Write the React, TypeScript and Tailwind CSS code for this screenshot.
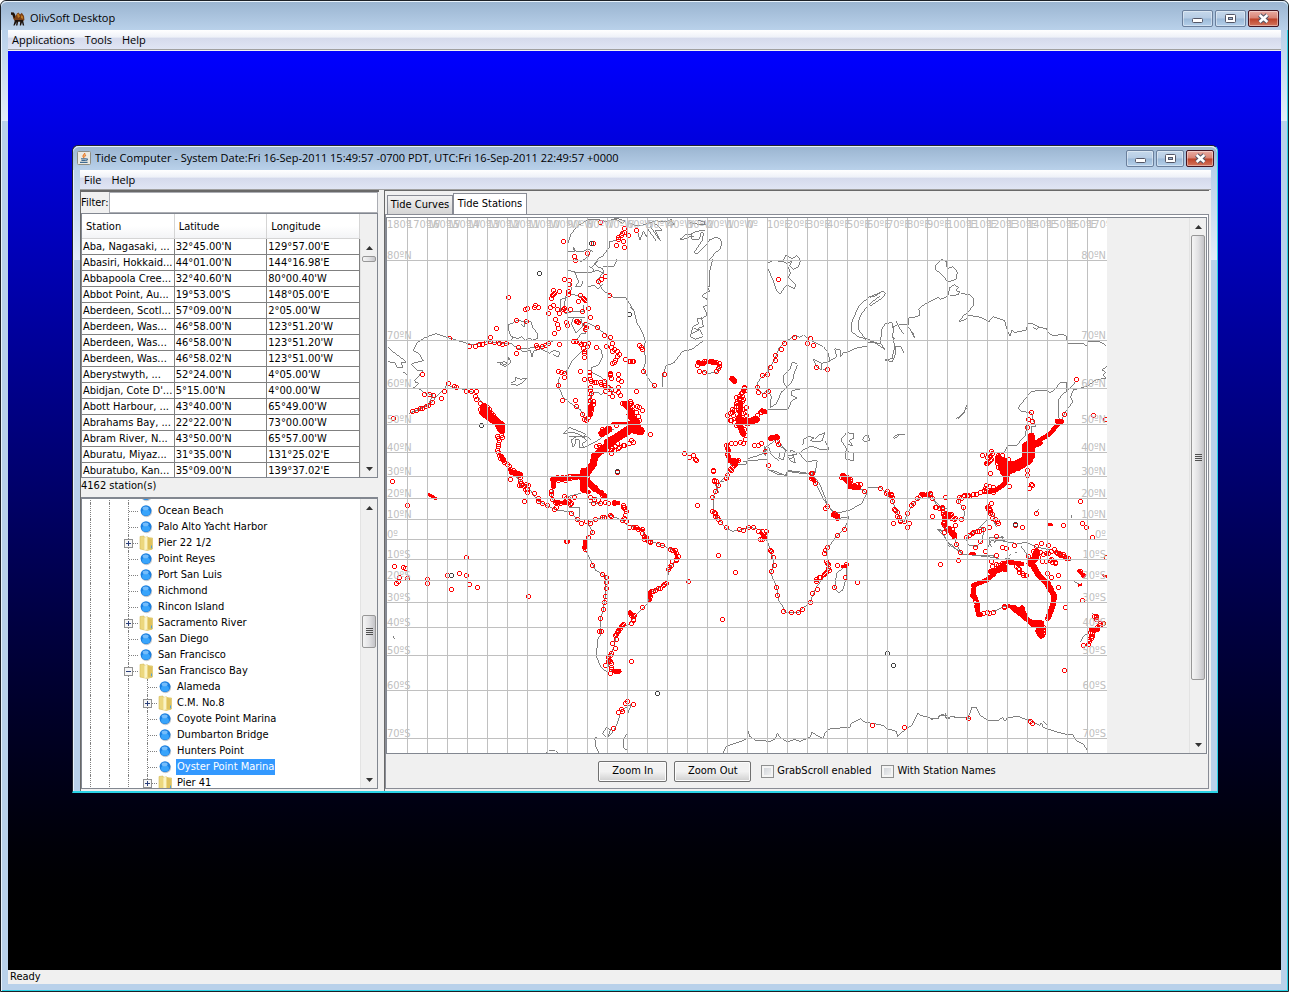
import React from "react";

const TABLE_ROWS: [string, string, string][] = [
  ["Aba, Nagasaki, ...", "32°45.00'N", "129°57.00'E"],
  ["Abasiri, Hokkaid...", "44°01.00'N", "144°16.98'E"],
  ["Abbapoola Cree...", "32°40.60'N", "80°00.40'W"],
  ["Abbot Point, Au...", "19°53.00'S", "148°05.00'E"],
  ["Aberdeen, Scotl...", "57°09.00'N", "2°05.00'W"],
  ["Aberdeen, Was...", "46°58.00'N", "123°51.20'W"],
  ["Aberdeen, Was...", "46°58.00'N", "123°51.20'W"],
  ["Aberdeen, Was...", "46°58.02'N", "123°51.00'W"],
  ["Aberystwyth, ...", "52°24.00'N", "4°05.00'W"],
  ["Abidjan, Cote D'...", "5°15.00'N", "4°00.00'W"],
  ["Abott Harbour, ...", "43°40.00'N", "65°49.00'W"],
  ["Abrahams Bay, ...", "22°22.00'N", "73°00.00'W"],
  ["Abram River, N...", "43°50.00'N", "65°57.00'W"],
  ["Aburatu, Miyaz...", "31°35.00'N", "131°25.02'E"],
  ["Aburatubo, Kan...", "35°09.00'N", "139°37.02'E"],
];

type TreeRow = { name: string; depth: 3 | 4; kind: "leaf" | "closed" | "open"; selected?: boolean };

const TREE_ROWS: TreeRow[] = [
  { name: "Oakland", depth: 3, kind: "leaf" },
  { name: "Ocean Beach", depth: 3, kind: "leaf" },
  { name: "Palo Alto Yacht Harbor", depth: 3, kind: "leaf" },
  { name: "Pier 22 1/2", depth: 3, kind: "closed" },
  { name: "Point Reyes", depth: 3, kind: "leaf" },
  { name: "Port San Luis", depth: 3, kind: "leaf" },
  { name: "Richmond", depth: 3, kind: "leaf" },
  { name: "Rincon Island", depth: 3, kind: "leaf" },
  { name: "Sacramento River", depth: 3, kind: "closed" },
  { name: "San Diego", depth: 3, kind: "leaf" },
  { name: "San Francisco", depth: 3, kind: "leaf" },
  { name: "San Francisco Bay", depth: 3, kind: "open" },
  { name: "Alameda", depth: 4, kind: "leaf" },
  { name: "C.M. No.8", depth: 4, kind: "closed" },
  { name: "Coyote Point Marina", depth: 4, kind: "leaf" },
  { name: "Dumbarton Bridge", depth: 4, kind: "leaf" },
  { name: "Hunters Point", depth: 4, kind: "leaf" },
  { name: "Oyster Point Marina", depth: 4, kind: "leaf", selected: true },
  { name: "Pier 41", depth: 4, kind: "closed" },
];

/* ---------- chart data: each sector has its own origin, three units per pixel ---------- */

type Sector = {
  x: number;
  y: number;
  coast: string;
  stations: string;
  chains: [number, string][];
  solid: [number, string][];
};

const SECTORS: Sector[] = [
  {
    x: -3,
    y: -29,
    coast:
      "M12 472L35 492 48 500 66 516 52 518 56 534 40 532 32 518 12 515M58 546L72 556M196 444L155 431 120 444 98 460 88 482 104 490 118 512 92 518 82 524 100 540 118 542 92 572 96 578 106 580 88 594 110 598 120 608 136 612 148 614 134 640 108 656 76 670 110 658 140 640 165 612 180 596 190 585 210 592 250 600 275 610 295 640M196 444L232 455 265 464 310 455 345 458 385 462 400 476 440 474 480 468 510 452M372 404L376 430 386 444 378 454M372 404L384 400 400 390 420 396 440 394 446 412 460 430 462 444 444 452 438 444 424 452 414 440 402 446 384 440M424 396L420 410 412 402M406 478L420 486 438 480 444 500 448 484 470 476 496 490 510 480 528 488 522 500 508 494M338 516L352 518 364 526 376 504 370 500 382 516 364 530 348 522 360 514 368 520M380 580L396 572 394 562 410 568 430 564 418 576 400 586 380 582M526 560L522 584 536 620 560 640 590 660 604 690M596 480L580 496 562 516 550 540 540 552M618 640L622 610 640 606 650 614 662 606M640 470L652 482 656 500 644 524 622 534 624 548 650 560 670 580 690 616M536 732L556 712 580 722 604 732 600 740 572 728 552 728ZM556 740L610 740M566 770L562 750 580 738 600 742 608 752 596 760 598 774 588 774 586 750 576 748 572 766 566 770M600 772L640 752 690 716M610 740L620 748M552 158L562 130 584 106 612 90 640 88 665 94 700 86 722 92 716 100 690 84M552 185L572 184 566 170 578 186 600 184 610 176 626 184M552 240L572 246 620 248 640 240 660 250 656 236 640 230 632 220 640 214 622 232 616 230 630 238 620 250M572 246L584 276 574 290 590 290 598 272M620 180L612 200 592 214 572 208M640 208L656 198 676 172 676 156 700 150 716 122M656 250L640 270 656 300 672 312 690 322 726 324 750 362M656 230L690 228 700 206M560 280L562 300 546 318 540 350 544 370 560 366 600 364 598 346M552 310L600 322M548 322L530 328 528 364M570 380L562 400 576 428 596 410 592 386 574 400M612 400L640 412 660 430 680 450M600 400L604 432 592 430 576 452M612 290L630 286 642 296 656 284M552 382L604 382",
    stations:
      "538,154 628,160 650,95 610,190 572,197 574,211 466,250 374,322 541,268 556,271 556,282 644,274 652,266 664,257 677,314 455,344 463,352 451,352 430,355 424,358 398,391 427,394 337,415 197,445 319,442 500,352 508,344 494,370 520,358 508,300 510,308 506,316 502,324 508,312 526,304 526,370 514,388 520,403 522,415 512,430 538,358 540,355 545,360 558,358 552,304 554,313 590,316 598,324 600,328 604,330 584,334 614,355 596,364 619,382 580,394 584,397 578,394 604,403 606,410 604,418 640,412 548,397 550,404 660,436 680,442 684,460 686,482 612,460 610,468 638,472 668,468 526,462 494,460 484,464 476,468 460,470 458,466 402,472 397,490 116,553 292,706 524,544 532,546 540,550 542,562 522,584 534,630 574,630 576,648 590,544 602,566 596,672 600,688 606,690 680,552 702,552 702,566 712,572 682,564 702,590 736,514 744,514 724,508 722,115 716,130 712,134 718,152 722,172 696,166 702,146 704,142 732,136 720,126 700,845 646,766 656,716 698,706 742,750 680,548 678,554 380,868 26,872 28,684",
    chains: [
      [10, "258,466 275,468 295,462 320,452 345,460 368,460"],
      [9, "88,662 108,656 126,648 145,636"],
      [14, "122,610 136,612 148,614"],
      [13, "174,622 180,604 190,582 212,588 218,592"],
      [10, "250,600 275,606 275,628 290,640"],
      [6, "290,655 310,650 330,684 350,708 356,740"],
      [7, "343,735 343,796 358,808 380,836 410,852"],
      [7, "570,450 600,464 600,500"],
      [8, "684,470 706,492 690,516 684,520"],
      [8, "618,544 616,568 630,576 660,574 666,600 684,618"],
      [8, "620,590 618,640 628,634 620,670 606,690"],
      [8, "654,580 672,592 704,604 708,616"],
      [6, "716,636 744,660 740,680 748,696"],
      [5, "506,866 560,858 610,862"],
      [8, "640,766 680,780 700,760"],
      [8, "684,786 700,776 724,762 748,756"],
    ],
    solid: [
      [22, "M300 650L312 672 336 692 352 720"],
      [24, "M298 668L320 684 352 706"],
      [13, "M620 646L618 676"],
      [14, "M352 798L358 812"],
      [12, "M380 842L408 852"],
      [22, "M654 730L674 718"],
      [8, "M686 700L750 698"],
      [22, "M636 796L690 748 724 724"],
      [26, "M672 758L700 742 740 716 768 722"],
      [22, "M632 798L628 822 608 850"],
      [10, "M505 866L560 862 606 862"],
      [16, "M722 640L746 672 748 696"],
    ],
  },
  {
    x: 243,
    y: -29,
    coast:
      "M0 100L20 108 44 104 60 98 78 92 100 96 126 88 110 108 134 102 120 92M24 130L30 150 40 124 50 140 54 118 78 152M60 108L92 154 76 122 96 120 72 98M150 148L166 134 182 132 200 124 225 120M150 148L156 150 180 140 192 138M186 128L186 148 208 148 214 126 220 128 218 150 192 188 200 192 230 164 238 150 256 142 270 146 276 158 270 178 254 190 242 206 232 214M180 98L200 102 226 104 222 94 204 92M248 208L240 240 240 290 232 290 240 304 224 310 216 320 230 326 234 344 220 350 226 362 232 376 214 386 200 386 206 400 190 410 184 424 182 440 196 448 220 440M214 380L220 410 206 414 218 436M186 430L206 420 192 414M218 454L186 478 158 484 132 518 108 528 98 560 96 592M0 350L12 362 20 396 38 430 46 452 42 480 48 510 40 540 58 570 74 590M206 520L230 515 262 518 270 530 262 546 236 550 212 542M414 218L430 212 456 214 470 220 482 250 474 262 498 284 492 296 470 284 450 312 440 302 428 268 414 236ZM460 210L468 194 476 200 488 206 500 196 512 212 504 232 490 238 478 226M470 222L484 214 482 226M750 308L716 322 686 348 674 376 664 400 664 424 684 440 708 446 720 448M750 318L716 344 694 372 684 396 686 420 704 444 714 456 750 460M544 440L530 444 520 434 510 442 498 436 464 456 446 476 434 510 418 532 412 552 396 560 382 580 382 600 400 612 412 598M540 450L580 470 596 490 598 514 574 520 576 540 560 530 550 508 576 520M580 538L592 536M598 514L620 500 614 476 630 480 632 500 642 486 650 488 680 474 714 468M502 520L486 518 480 536 460 556 462 580 472 592 454 606 440 640 420 654 424 620 414 600M502 526L492 552 488 572 472 592M414 658L440 660 474 658 484 634 500 624 484 616 486 602 516 596 530 596 480 596M518 766L522 748 536 738 552 744 540 752 560 756 576 752 584 728 566 736 556 746M584 752L598 778 570 778 544 768 518 780M636 744L650 728 672 732 672 744 658 752 668 768 652 762 650 784 672 790 672 812 648 808 646 790 650 776 634 752ZM704 738L716 738 718 752 704 756 698 750ZM300 824L350 822 352 806 380 798 400 790 412 780M340 814L406 808 414 812 414 838 440 852 470 856 472 842 500 844 554 854 562 812 528 814 508 790 520 780M500 790L484 780 476 790 464 776 440 748 424 760 408 770M404 768V796H408V770M416 770L424 794 446 812 M440 760L466 780 460 810 446 804 450 790M474 800L482 812 496 820 490 796 472 796 500 794M480 808L492 800",
    stations:
      "19,119 445,268 494,442 540,445 532,458 550,466 464,458 454,478 436,496 436,511 420,532 412,553 398,556 382,592 386,606 416,602 404,614 559,532 592,538 28,466 34,472 36,478 2,514 10,514 40,544 104,553 74,586 19,604 164,790 178,800 190,796 196,806 200,811 250,841 290,862 292,855 254,870 406,784 416,826 545,850 544,864 640,856 656,866 2,640 28,650 36,660 4,750 60,732 304,760 316,758 330,756 340,760 300,690 292,674 300,668 344,590 346,600 386,764 394,758 372,766",
    chains: [
      [8, "204,522 222,514 250,512 266,520 270,528 260,544"],
      [9, "210,542 224,546"],
      [7, "320,620 334,634 330,660 346,654 348,676"],
      [9, "310,654 306,690 318,704"],
      [8, "346,592 330,616 320,640 314,660"],
      [7, "376,684 388,668 404,664"],
      [7, "424,742 438,740 444,752 446,762"],
      [7, "330,700 340,720 346,746"],
      [7, "292,764 294,800 310,820 324,812 300,838"],
      [9, "2,630 8,660 20,650 28,690"],
      [5, "636,860 660,868"],
      [8, "336,606 338,630 324,650 340,668"],
    ],
    solid: [
      [14, "M204 518L222 520"],
      [13, "M232 516L256 518"],
      [16, "M306 566L314 574"],
      [22, "M326 688L352 698 378 688"],
      [18, "M326 700L340 732"],
      [12, "M334 640L328 680"],
      [14, "M396 662L408 666"],
      [10, "M292 764L296 806 324 812"],
      [14, "M300 812L318 816"],
      [16, "M424 744L442 742"],
      [24, "M0 716L32 724"],
      [20, "M0 674L20 696 24 716"],
    ],
  },
  {
    x: 483,
    y: -29,
    coast:
      "M0 322L16 318 40 302 46 312 34 326 0 348M0 454L12 456 44 478 32 460 34 420 46 400 66 398 70 416 68 440 74 470 66 506 46 510 66 516 78 490 74 466M66 440L74 446M74 470L92 470 102 490M66 412L84 404 78 392 92 420 102 432M86 404L110 404 118 416 130 430 134 444 122 420M114 404L116 384 132 382 150 376 146 356 172 338 204 322 210 328 228 322 236 312 238 294 252 284 266 292 258 302 270 306 264 314 240 318M272 310L300 314 312 328 310 346 296 364 280 378 266 396 288 388 296 376 334 382 356 396 370 380 404 392 410 416 420 438 426 420 434 428 468 420 474 400 490 402 508 412 500 418 488 412M508 412L530 416 534 428 550 438 576 432 590 440 592 460 640 460 652 470 654 454 690 456 708 466M198 224L214 208 228 214 232 236 248 230 262 246 258 268 234 276 218 256 198 240ZM290 646L282 668 262 688M290 654L274 676 258 686M70 742L82 734 104 734M72 746L88 736M710 530L696 540 706 546 700 556 708 566 680 568 656 586 632 594 610 600 602 620 608 636 590 660 574 690 566 684 566 630 578 612 590 604 588 576 570 578 556 598 540 608 524 600 484 604 444 654 454 664 484 668M590 606L618 574M474 690L466 736 440 766 414 766 404 786M484 668L490 690 498 710 486 708 486 736M356 786L346 800",
    stations:
      "620,568 584,673 670,674 706,688 484,667 476,688 486,694 472,712 338,796 364,782 352,800 362,798 350,818 362,810 366,790 362,850 384,794 398,794 416,806 472,855 472,840",
    chains: [[7, "384,800 380,820 398,846"], [7, "356,790 362,810 352,820"]],
    solid: [
      [16, "M562 694L574 694"],
      [13, "M570 698L536 734 500 756"],
      [20, "M508 758L478 770"],
      [20, "M484 738V800"],
      [32, "M472 770L474 808 440 828 400 830"],
      [22, "M386 804L398 826 420 840"],
      [20, "M408 846V870"],
      [20, "M400 812L420 836"],
    ],
  },
  {
    x: -3,
    y: 251,
    coast:
      "M372 0L430 50 465 95 515 120 562 126 580 150 612 162M400 20L412 54M510 30L502 84 516 98 545 100 560 80M560 100L556 114 586 112 588 140M550 80L590 70M614 98L650 100M618 84L632 88 640 82M612 162L640 146 680 136 712 150 730 164 775 178 786 208 840 228 866 240 882 256 874 270 856 296 848 334 830 352 800 366 790 400 770 420 752 440 736 462 710 472 695 500 690 530 676 560 674 590 684 606M612 162L626 186 602 210 604 240 626 284 634 300 666 320 666 366 658 420 648 450 650 494 640 510 638 560 650 590 668 606M742 704L732 728M740 704L712 720 700 760 684 790 670 802 680 780 668 772 656 790 664 800M632 804L636 830 644 848M634 804L640 800M728 792L718 810 720 834 730 842M488 848L494 842 514 842 520 848M26 498L32 506M990 30L1004 70M1020 34L1010 36",
    stations:
      "26,32 70,106 422,94 380,28 700,4 940,106 1004,256 914,334 1016,448 988,2 548,212 550,214 248,262 32,289 58,292 64,295 70,324 46,322 44,332 38,340 130,326 130,340 190,316 226,310 248,316 202,358 256,343 280,352 434,379 742,574 820,670 748,703 730,694 724,700 712,718 714,724 704,727 688,775 452,68 462,84 464,92 476,100 490,106 512,116 516,112 562,128 558,102 570,80 580,148 592,158 606,154 618,160 634,146 626,187 612,202 656,142 660,140 678,136 682,138 714,150 726,152 604,238 600,230 626,284 656,313 668,322 668,336 668,355 664,378 660,397 658,418 650,445 646,484 652,484 776,411 752,434 718,463 686,520 698,508 694,535 682,550 678,556 680,574 664,586 672,572 680,610 698,492 704,484 800,214 824,222 836,226 856,292 862,284 854,298 866,274 780,208 786,202 628,98 718,106 722,112",
    chains: [
      [7, "385,4 408,14 412,40 430,66 434,44 405,44"],
      [8, "510,28 502,74 514,96 530,98 548,96"],
      [8, "512,28 545,30 560,22 600,20"],
      [7, "738,170 775,178 786,206 800,216"],
      [8, "720,110 726,126 722,144"],
      [6, "860,234 878,248 882,258 878,270"],
      [6, "848,336 830,352 800,366 796,386"],
      [5, "740,428 750,446 742,458"],
      [6, "716,464 704,480 694,496"],
      [7, "674,560 682,590 680,608"],
      [8, "616,40 650,66 664,78"],
      [9, "620,80 650,98 690,98"],
      [9, "552,84 560,100 540,78"],
    ],
    solid: [
      [12, "M380 4L392 12 410 14"],
      [9, "M132 72L156 86"],
      [11, "M508 50L514 28 548 28 570 18 600 18"],
      [22, "M600 4V58"],
      [12, "M598 62L614 66"],
      [20, "M610 34L632 56"],
      [14, "M628 54L664 78"],
      [8, "M752 174L776 180"],
      [14, "M690 98L702 99"],
      [12, "M604 212V232"],
      [9, "M798 364V388"],
      [14, "M738 428L744 434"],
      [14, "M690 604L706 604"],
      [9, "M514 96L546 98"],
      [8, "M874 244L880 264"],
    ],
  },
  {
    x: 313,
    y: 251,
    coast:
      "M94 0L60 36 40 80 40 130 62 156 78 174 98 184 120 180 150 172 182 180 196 200 212 240 222 284 212 310 230 350 236 392 250 412 256 428 296 428 310 414 330 396 350 350 388 300 378 240 412 196 434 176 448 140 412 146 402 132 372 90 336 16M336 10L360 44 376 84 382 108 408 130 450 120 486 100 500 70 490 60 462 52M500 52L542 54 560 70 578 94 600 150 612 156 622 130 640 100 670 76 700 86 720 110 740 116M410 310L438 286 440 320 428 360 416 368 404 354 410 310M214 0L256 16 262 4 320 12 346 4M712 178L730 196 750 226 790 250M716 178L738 184M70 848L80 828 130 812 144 804 144 782 150 800 166 810 210 814 226 806 232 788 240 802 262 816 284 808 300 814 330 802 336 786 350 796 370 806 374 790 390 776 450 772 454 760 482 746 494 756 550 766 560 776 590 784 592 800 612 782 636 766 654 730 662 736 690 744 694 748 716 744 722 734 742 736 746 748 750 740 800 744 812 746",
    stations:
      "40,2 78,24 82,16 94,0 42,32 50,34 56,46 46,64 36,82 38,122 62,156 78,172 118,178 130,180 146,172 160,172 56,256 106,307 68,448 212,240 214,244 220,262 224,284 214,302 230,352 232,376 250,424 274,427 296,427 308,418 330,397 338,370 352,358 348,332 412,286 440,283 436,320 404,352 473,337 412,196 434,178 382,230 376,240 374,248 336,10 346,38 376,115 382,109 404,130 412,144 580,160 542,55 494,64 600,152 612,154 622,172 628,158 622,130 640,100 634,104 578,94 562,62 574,76 698,139 692,70 698,84 736,82 722,283 776,271 734,187 770,222 782,247 742,138 516,766 614,772 562,550 580,586 806,744 706,110 726,110 776,92 790,112 784,148 766,164",
    chains: [
      [5, "40,120 44,132 56,146"],
      [6, "178,182 196,184 196,200 180,208"],
      [6, "382,270 386,300 370,314 350,328"],
      [7, "430,12 444,30 462,44 480,42"],
      [6, "584,114 600,150"],
      [6, "655,82 672,72 690,72"],
      [7, "732,130 732,166 756,178 764,200"],
      [9, "776,90 790,76 806,76"],
      [6, "740,126 766,144"],
      [7, "560,66 578,80"],
    ],
    solid: [
      [11, "M336 24L344 34"],
      [12, "M184 190L196 204"],
      [16, "M400 134L412 138"],
      [16, "M430 20L444 36"],
      [16, "M450 50L476 52"],
      [12, "M664 72L676 74"],
      [14, "M748 182L762 200"],
      [10, "M428 290L438 288"],
    ],
  },
  {
    x: 543,
    y: 251,
    coast:
      "M0 66L20 106 50 130 60 150 80 150 96 148 104 136 100 110 84 96 90 80M22 178L34 182 54 216 96 252 190 262 192 258 130 258M190 262L210 268 240 266M54 224L60 232M40 168L70 196 80 222 92 246M110 200L112 224 140 230 156 212 162 176 150 172 130 188ZM172 100L174 130 190 134 200 160M188 152L204 168M192 158L200 170M172 148L150 172M176 204L220 204 212 198 222 202 218 206M180 204L178 220 186 232M182 214L174 232M220 214L250 218 262 226M196 212L224 212M238 256L242 254M256 248L260 246M262 220L290 218 320 232 366 240 424 274M272 228L286 246 300 268 330 270M184 210L196 214 190 220M190 426L216 412 240 406M424 144L426 136M320 128L326 116M430 332L446 342M420 270L424 274M486 430L506 440 504 460M452 516L460 500 480 484M24 744L0 746M24 744L28 736 46 736 52 748 60 740 114 744 126 712 138 712 150 736 176 752 204 752 218 742 224 754 232 744 264 738 280 746 296 750 330 766 334 758 340 772 350 776 380 786 414 794 428 794 440 812 460 822 474 844 474 848M46 730V744M340 752L350 766",
    stations:
      "182,10 239,48 298,54 304,42 306,44 293,14 452,92 320,128 256,166 400,166 458,158 470,172 487,202 86,94 100,112 94,148 184,98 174,108 178,116 254,224 276,170 178,172 200,199 152,214 136,230 166,242 200,256 86,271 32,283 92,247 80,223 44,187 8,139 334,220 356,224 318,228 294,258 386,316 386,352 406,410 456,391 450,304 460,316 528,262 404,601 115,745 300,754 308,758 216,232 228,234 352,310 364,322 364,268 376,278 356,338 184,274 222,408 224,410 520,460 498,438 460,526 478,506 488,498 510,464 314,254 324,262",
    chains: [
      [8, "90,80 130,74 160,62 190,66"],
      [8, "166,62 168,46 190,50"],
      [8, "110,200 132,186 160,178"],
      [6, "174,108 186,134 204,160"],
      [7, "20,110 36,116 46,136 42,166 66,184 74,200"],
      [6, "48,130 72,146"],
      [8, "182,300 186,288 216,280"],
      [6, "262,286 268,306 290,316"],
      [7, "148,430 170,428 190,426"],
      [7, "312,240 340,252 372,240 410,264"],
      [8, "340,270 376,276"],
      [6, "384,246 414,264"],
      [7, "484,484 500,478 512,458"],
      [7, "354,442 360,420"],
      [8, "342,470 340,490"],
      [5, "496,436 500,446"],
      [7, "476,520 488,490"],
      [6, "128,372 140,400 142,420"],
    ],
    solid: [
      [14, "M176 66L200 58 222 44 232 16"],
      [18, "M220 8L250 0"],
      [14, "M62 184L74 198"],
      [14, "M130 346L170 330 192 312"],
      [18, "M186 306L220 294"],
      [14, "M206 300L222 280 224 300"],
      [14, "M232 276L276 282"],
      [14, "M132 348L130 374"],
      [10, "M134 374L146 404"],
      [14, "M142 404L144 430 152 434"],
      [20, "M300 280L318 262 320 246"],
      [18, "M308 284L326 316 350 340 364 360"],
      [17, "M356 350L372 376 370 402 356 440"],
      [12, "M234 408L256 414"],
      [20, "M254 416L284 438"],
      [16, "M276 414L282 440 304 458"],
      [22, "M308 460L332 462 330 480"],
      [20, "M326 484L334 496"],
      [14, "M484 480L502 478"],
      [9, "M120 252H134"],
      [9, "M356 164L366 165"],
      [7, "M446 346L454 344"],
      [7, "M520 316L530 320"],
      [8, "M172 108V120"],
      [9, "M446 302L462 318"],
    ],
  },
];

const LONE_MARKS: [number, number][] = [
  [152, 54],
  [204, 24],
  [242, 95],
  [64, 356],
  [500, 434],
  [506, 446],
  [270, 474],
  [230, 252],
  [94, 206],
  [628, 305],
];

const parsePoints = (text: string): [number, number][] =>
  text.split(" ").map((pair) => {
    const [a, b] = pair.split(",").map(Number);
    return [a, b];
  });

/* Places points every `step` units along a line, with a small alternating spread. */
function spread(step: number, text: string): [number, number][] {
  const points = parsePoints(text);
  const result: [number, number][] = [];
  let n = 0;
  for (let i = 1; i < points.length; i++) {
    const [ax, ay] = points[i - 1];
    const [bx, by] = points[i];
    const length = Math.hypot(bx - ax, by - ay);
    const count = Math.max(1, Math.round(length / (step * 1.3)));
    for (let k = 0; k < count; k++) {
      const t = k / count;
      const wobble = ((n * 7) % 5) - 2;
      result.push([ax + (bx - ax) * t + wobble, ay + (by - ay) * t - wobble]);
      n++;
    }
  }
  result.push(points[points.length - 1]);
  return result;
}

const GRID_X = Array.from({ length: 35 }, (_, i) => 20 * (i + 1));
const LATITUDES: [string, number][] = [
  ["80ºN", 41],
  ["70ºN", 121],
  ["60ºN", 169],
  ["50ºN", 205],
  ["40ºN", 233],
  ["30ºN", 257],
  ["20ºN", 279],
  ["10ºN", 300],
  ["0º", 320],
  ["10ºS", 340],
  ["20ºS", 361],
  ["30ºS", 383],
  ["40ºS", 408],
  ["50ºS", 436],
  ["60ºS", 471],
  ["70ºS", 519],
];

function longitudeLabel(index: number) {
  const degrees = index * 10 - 180;
  if (degrees === 0 || degrees === -180) return `${Math.abs(degrees)}º`;
  return `${Math.abs(degrees)}º${degrees < 0 ? "W" : "E"}`;
}

function StationChart() {
  return (
    <svg
      className="block h-full w-[720px] shrink-0 bg-white"
      viewBox="0 -1 720 535"
      preserveAspectRatio="xMinYMin slice"
      shapeRendering="crispEdges"
      role="img"
      aria-label="World chart of tide stations"
    >
      {SECTORS.map((s, i) => (
        <g key={i} transform={`translate(${s.x} ${s.y}) scale(0.333333)`} fill="none">
          <path d={s.coast} stroke="#808080" strokeWidth="3" />
          {s.solid.map(([width, d], k) => (
            <path key={k} d={d} stroke="#ff0000" strokeWidth={width} strokeLinejoin="round" strokeLinecap="round" />
          ))}
        </g>
      ))}
      <g fill="none" stroke="#ff0000">
        {SECTORS.map((s, i) =>
          [...parsePoints(s.stations), ...s.chains.flatMap(([step, line]) => spread(step, line))].map(([x, y], k) => (
            <circle key={`${i}-${k}`} cx={Math.floor(s.x + x / 3) + 0.5} cy={Math.round(s.y + y / 3) + 0.5} r="2" />
          ))
        )}
      </g>
      <g fill="none" stroke="#404040">
        {LONE_MARKS.map(([x, y]) => (
          <circle key={`${x}-${y}`} cx={x + 0.5} cy={y + 0.5} r="2" />
        ))}
      </g>
      <g stroke="#c0c0c0">
        {GRID_X.map((x) => (
          <line key={x} x1={x + 0.5} y1="-1" x2={x + 0.5} y2="534" />
        ))}
        {LATITUDES.map(([, y]) => (
          <line key={y} x1="0" y1={y + 0.5} x2="720" y2={y + 0.5} />
        ))}
      </g>
      <g fill="#c0c0c0" fontSize="11">
        {Array.from({ length: 36 }, (_, i) => (
          <text key={i} x={i * 20} y="9">
            {longitudeLabel(i)}
          </text>
        ))}
        {LATITUDES.map(([label, y]) => (
          <React.Fragment key={label}>
            <text x="0" y={y - 1}>
              {label}
            </text>
            <text x="719" y={y - 1} textAnchor="end">
              {label}
            </text>
          </React.Fragment>
        ))}
      </g>
    </svg>
  );
}

/* ---------- window chrome ---------- */

function CamelIcon() {
  return (
    <svg className="h-4 w-4" viewBox="0 0 16 16" aria-hidden="true">
      <path d="M1 1.6l3 .4 1.6 3L7 2.4 8.6 1.6 10 3.6l1.8-1.8L14 5l.4 4-2 1.4H5L3.2 7.5 2.6 4.2 1 3.4z" fill="#7a3f14" />
      <path d="M7 3.2l1.5-.6L10 5.4 8 7zM11 4l2 1.5V8l-2-1z" fill="#c07b25" />
      <path d="M1 1.6h2.8L5.2 4 4.6 7.4 3.2 6 2.6 3.8 1 3.4zM5 9h8l1.2 5.6h-1.4L12 11.2 11 14.6H9.8l.4-4.2H8.2l-.8 4.2H6l.6-3.6-2 3.6H3.4z" fill="#1b120c" />
    </svg>
  );
}

function JavaIcon() {
  return (
    <svg className="h-[14px] w-[14px]" viewBox="0 0 14 14" aria-hidden="true">
      <rect x=".5" y=".5" width="13" height="13" rx="1" fill="#eceae2" stroke="#8e8e84" />
      <path d="M7.8 2C8 3.4 5.6 4 6 5.4c.2.8 1 1 .9 1.8M9 3.8C8 4.4 7.4 4.8 7.8 6" fill="none" stroke="#e8731a" strokeWidth="1.1" />
      <path d="M4 7.8h5.2M4.4 9.4h4.4M9.4 7.8c1.6-.2 1.4 1.4-.4 1.6M3 11.4h7.6" fill="none" stroke="#3f6b92" strokeWidth="1.1" />
    </svg>
  );
}

function CaptionButton({ label, kind, width }: { label: string; kind: "min" | "max" | "close"; width: string }) {
  const tone =
    kind === "close"
      ? "border-[#431422] bg-[linear-gradient(#e9aca2,#d88273_48%,#bd4128_52%,#d4765e)]"
      : "border-[#6a7f9c] bg-[linear-gradient(#c5d8eb,#b6cce4_48%,#9bb9d7_52%,#b5d0ea)]";
  return (
    <button
      type="button"
      aria-label={label}
      className={`flex h-[17px] items-center justify-center rounded-xs border shadow-[inset_0_0_0_1px_rgba(255,255,255,0.4)] ${width} ${tone}`}
    >
      <svg className="h-[11px] w-[13px]" viewBox="0 0 13 11" aria-hidden="true">
        {kind === "min" && <rect x="1.5" y="5.5" width="10" height="4" rx="1" fill="#fff" stroke="#535666" />}
        {kind === "max" && (
          <>
            <rect x="1.5" y="1.5" width="10" height="8" rx="1" fill="#fff" stroke="#535666" />
            <rect x="4.5" y="4.5" width="4" height="2" fill="#9db7d3" stroke="#535666" />
          </>
        )}
        {kind === "close" && (
          <>
            <path d="M2.6 2l7.8 7M10.4 2L2.6 9" stroke="#535666" strokeWidth="4.6" />
            <path d="M2.6 2l7.8 7M10.4 2L2.6 9" stroke="#fff" strokeWidth="2.6" />
          </>
        )}
      </svg>
    </button>
  );
}

function MenuBar({ items }: { items: string[] }) {
  return (
    <nav className="flex h-5 shrink-0 items-center gap-2.5 border-b border-[#a0a0a0] bg-[linear-gradient(#ffffff,#eef1f8_38%,#d5daec_42%,#e0e5f4)] px-1 font-['Open_Sans',sans-serif]">
      {items.map((item) => (
        <button key={item} type="button" className="leading-4">
          {item}
        </button>
      ))}
    </nav>
  );
}

function ArrowButton({ up }: { up?: boolean }) {
  return (
    <button type="button" aria-label={up ? "Scroll up" : "Scroll down"} className="flex h-[17px] shrink-0 items-center justify-center">
      <svg className="h-1 w-[7px]" viewBox="0 0 7 4" aria-hidden="true">
        <path d={up ? "M0 4L3.5 0 7 4z" : "M0 0L3.5 4 7 0z"} fill="#333" />
      </svg>
    </button>
  );
}

function ScrollBar({ before, thumb, grip }: { before: string; thumb: string; grip?: boolean }) {
  return (
    <div className="flex w-[17px] shrink-0 flex-col border-l border-[#e3e3e3] bg-[#f0f0f0]">
      <ArrowButton up />
      <div className="flex min-h-0 flex-1 flex-col">
        <div className={before} />
        <div
          className={`mx-px flex flex-col items-center justify-center gap-px rounded-xs border border-[#979797] bg-linear-to-r from-[#f5f5f5] via-[#e2e2e4] to-[#c4c4c8] ${thumb}`}
        >
          {grip && [0, 1, 2, 3].map((n) => <div key={n} className="h-px w-[7px] bg-[#505050]" />)}
        </div>
      </div>
      <ArrowButton />
    </div>
  );
}

/* ---------- left side ---------- */

function StationTable() {
  return (
    <div className="flex h-[265px] shrink-0 overflow-hidden border border-[#828790] bg-white">
      <div className="min-w-0 flex-1 overflow-hidden">
        <table className="w-full table-fixed border-separate border-spacing-0">
          <thead>
            <tr className="h-[25px]">
              {["Station", "Latitude", "Longitude"].map((title) => (
                <th
                  key={title}
                  className="border-r border-b border-[#d5d5d5] bg-linear-to-b from-white from-50% to-[#f3f4f6] p-0 pt-0.5 pl-1 text-left font-normal"
                >
                  {title}
                </th>
              ))}
            </tr>
          </thead>
          <tbody>
            {TABLE_ROWS.map((row, i) => (
              <tr key={i} className="h-4">
                {row.map((cell, k) => (
                  <td key={k} className="overflow-hidden border-r border-b border-[#808080] p-0 pl-px leading-[15px] whitespace-nowrap">
                    {cell}
                  </td>
                ))}
              </tr>
            ))}
          </tbody>
        </table>
      </div>
      <div className="flex flex-col">
        <div className="h-[25px] bg-[#f0f0f0]" />
        <div className="flex min-h-0 flex-1">
          <ScrollBar before="h-0" thumb="h-[6px]" />
        </div>
      </div>
    </div>
  );
}

function FolderIcon() {
  return (
    <svg className="h-4 w-4 shrink-0" viewBox="0 0 16 16" aria-hidden="true">
      <path d="M2 1.5l4-.5.5 1.5 3-.8.6 1 4.4.3V14l-5 1.500L2 14z" fill="#ecd77d" stroke="#d3b957" strokeWidth=".6" />
      <path d="M6.4 2.6l3.2-.8v12.4l-3.2 1z" fill="#fbf3c4" />
      <path d="M9.6 2l4.4 2v10.5L9.6 14z" fill="#dfc25c" />
      <path d="M13.5 10.5v2.8" stroke="#4fa3d8" />
    </svg>
  );
}

function DotIcon() {
  return (
    <svg className="h-4 w-4 shrink-0" viewBox="0 0 16 16" aria-hidden="true">
      <circle cx="8.5" cy="8.6" r="5.6" fill="#c3c8ce" />
      <circle cx="8" cy="7.6" r="5.4" fill="#1a7fe0" />
      <ellipse cx="8" cy="9.4" rx="4" ry="3" fill="#38a4fb" />
      <ellipse cx="7.6" cy="5.4" rx="3" ry="1.8" fill="#74bdfb" />
    </svg>
  );
}

function Guide({ branch, toggle }: { branch?: boolean; toggle?: "closed" | "open" }) {
  return (
    <span className="relative flex h-4 w-[19px] shrink-0 pl-[9px] first:w-[18px] first:pl-2">
      <span className="flex flex-1 items-center border-l border-dotted border-[#808080]">
        {branch && <span className="w-full border-t border-dotted border-[#808080]" />}
      </span>
      {toggle && (
        <button type="button" aria-label={toggle === "open" ? "Collapse" : "Expand"} className="absolute top-1 left-[5px] h-[9px] w-[9px] bg-white">
          <svg viewBox="0 0 9 9" className="block h-[9px] w-[9px]" shapeRendering="crispEdges" aria-hidden="true">
            <rect x=".5" y=".5" width="8" height="8" fill="#f6f6f6" stroke="#919191" />
            <path d={toggle === "open" ? "M2 4.5h5" : "M2 4.5h5M4.5 2v5"} stroke="#2a3f7a" />
          </svg>
        </button>
      )}
    </span>
  );
}

function StationTree() {
  return (
    <div className="flex min-h-0 flex-1 border border-t-2 border-[#828790] bg-white">
      <ul className="min-w-0 flex-1 overflow-hidden">
        {TREE_ROWS.map((row, i) => (
          <li key={row.name} className={`flex h-4 items-center ${i === 0 ? "-mt-3" : ""}`}>
            {Array.from({ length: row.depth }, (_, d) => {
              const last = d === row.depth - 1;
              return <Guide key={d} branch={last} toggle={last && row.kind !== "leaf" ? row.kind : undefined} />;
            })}
            {row.kind === "leaf" ? <DotIcon /> : <FolderIcon />}
            <span className={`ml-[3px] px-px leading-4 whitespace-nowrap ${row.selected ? "bg-[#3399ff] text-white" : ""}`}>{row.name}</span>
          </li>
        ))}
      </ul>
      <ScrollBar before="h-[99px]" thumb="h-[33px]" grip />
    </div>
  );
}

/* ---------- application ---------- */

function TideWindow() {
  return (
    <section className="absolute top-[94px] right-[63px] bottom-[177px] left-16 flex flex-col rounded-t-md border border-b-2 border-[#20242c] border-r-[#2ad3e6] border-b-[#2ad3e6] bg-[linear-gradient(#b9d1ea_25px,#e3edf8_114px,#b9d1ea_114px)] shadow-[inset_1px_1px_0_#e8f2fb]">
      <header className="flex h-6 shrink-0 items-center gap-1 rounded-t-md bg-linear-to-b from-[#9ab4d0] to-[#b9d1ea] pr-[3px] pl-1 font-['Open_Sans',sans-serif] shadow-[inset_0_1px_0_#e8f2fb]">
        <JavaIcon />
        <h2 className="min-w-0 flex-1 truncate">
          Tide Computer - System Date:Fri 16-Sep-2011 15:49:57 -0700 PDT, UTC:Fri 16-Sep-2011 22:49:57 +0000
        </h2>
        <div className="flex gap-0.5">
          <CaptionButton label="Minimize" kind="min" width="w-7" />
          <CaptionButton label="Maximize" kind="max" width="w-7" />
          <CaptionButton label="Close" kind="close" width="w-7" />
        </div>
      </header>
      <div className="mr-1.5 ml-[7px] flex min-h-0 flex-1 flex-col bg-[#f0f0f0]">
        <MenuBar items={["File", "Help"]} />
        <div className="flex min-h-0 flex-1 gap-[5px] pr-[2px]">
          <div className="flex w-[299px] shrink-0 flex-col border-t-2 border-l border-[#696969] pr-px pb-[2px]">
            <div className="flex h-[21px] shrink-0 items-stretch">
              <label htmlFor="filter" className="w-7 shrink-0 leading-[21px]">
                Filter:
              </label>
              <input id="filter" type="text" className="min-w-0 flex-1 border border-[#abadb3] bg-white px-1 outline-none" />
            </div>
            <StationTable />
            <p className="mb-1 h-[15px] shrink-0 leading-[15px]">4162 station(s)</p>
            <StationTree />
          </div>
          <div className="flex min-w-0 flex-1 flex-col border-t border-l border-[#696969] pb-[2px]">
            <div className="flex h-[23px] shrink-0 items-end pt-px pl-0.5" role="tablist">
              <button
                type="button"
                role="tab"
                aria-selected="false"
                className="h-[19px] w-[66px] border border-b-0 border-[#898c95] bg-linear-to-b from-[#f2f2f2] to-[#d5d5d5] pt-px whitespace-nowrap"
              >
                Tide Curves
              </button>
              <button
                type="button"
                role="tab"
                aria-selected="true"
                className="h-[21px] w-[74px] border border-b-0 border-[#898c95] bg-white whitespace-nowrap"
              >
                Tide Stations
              </button>
            </div>
            <div className="flex min-h-0 flex-1 flex-col border border-[#898c95] bg-[#f0f0f0]">
              <div className="flex min-h-0 flex-1 border-t-2 border-r border-white">
                <div className="flex min-w-0 flex-1 border border-[#828790]">
                  <div className="min-w-0 flex-1 overflow-hidden">
                    <StationChart />
                  </div>
                  <ScrollBar before="h-0" thumb="h-[445px]" grip />
                </div>
              </div>
              <div className="flex h-[34px] shrink-0 items-center justify-center gap-[7px]">
                <button
                  type="button"
                  className="h-[21px] w-[69px] rounded-xs border border-[#707070] bg-linear-to-b from-[#f2f2f2] from-50% to-[#d0d0d0] shadow-[inset_0_0_0_1px_#fcfcfc]"
                >
                  Zoom In
                </button>
                <button
                  type="button"
                  className="h-[21px] w-[77px] rounded-xs border border-[#707070] bg-linear-to-b from-[#f2f2f2] from-50% to-[#d0d0d0] shadow-[inset_0_0_0_1px_#fcfcfc]"
                >
                  Zoom Out
                </button>
                {["GrabScroll enabled", "With Station Names"].map((label) => (
                  <label key={label} className="ml-[3px] flex items-center gap-[3px]">
                    <input
                      type="checkbox"
                      className="h-[13px] w-[13px] appearance-none border border-[#8e8f8f] bg-linear-to-br from-[#cbcfd5] to-[#f6f6f6] shadow-[inset_0_0_0_2px_#f4f4f4]"
                    />
                    {label}
                  </label>
                ))}
              </div>
            </div>
          </div>
        </div>
      </div>
    </section>
  );
}

export default function App() {
  return (
    <main className="flex h-screen min-h-[820px] flex-col rounded-t-md border border-[#1c2026] bg-[linear-gradient(#b9d1ea_30px,#e3edf8_120px,#b9d1ea_120px)] font-['DejaVu_Sans_Condensed','DejaVu_Sans',sans-serif] text-[11px] text-black shadow-[inset_1px_1px_0_#e8f2fb,inset_-1px_-1px_0_#2ad3e6]">
      <header className="flex h-[29px] shrink-0 items-center gap-1 rounded-t-md bg-linear-to-b from-[#9ab4d0] to-[#b9d1ea] pt-1.5 pr-[9px] pl-[9px] font-['Open_Sans',sans-serif] shadow-[inset_0_1px_0_#e8f2fb]">
        <CamelIcon />
        <h1 className="flex-1">OlivSoft Desktop</h1>
        <div className="flex gap-0.5">
          <CaptionButton label="Minimize" kind="min" width="w-[31px]" />
          <CaptionButton label="Maximize" kind="max" width="w-[31px]" />
          <CaptionButton label="Close" kind="close" width="w-[31px]" />
        </div>
      </header>
      <div className="mx-[7px] mb-[7px] flex min-h-0 flex-1 flex-col bg-[#f0f0f0]">
        <MenuBar items={["Applications", "Tools", "Help"]} />
        <div className="relative mt-px min-h-0 flex-1 bg-linear-to-b from-[#0000ff] to-black">
          <TideWindow />
        </div>
        <footer className="h-[14px] shrink-0 px-0.5 leading-[14px]">Ready</footer>
      </div>
    </main>
  );
}
